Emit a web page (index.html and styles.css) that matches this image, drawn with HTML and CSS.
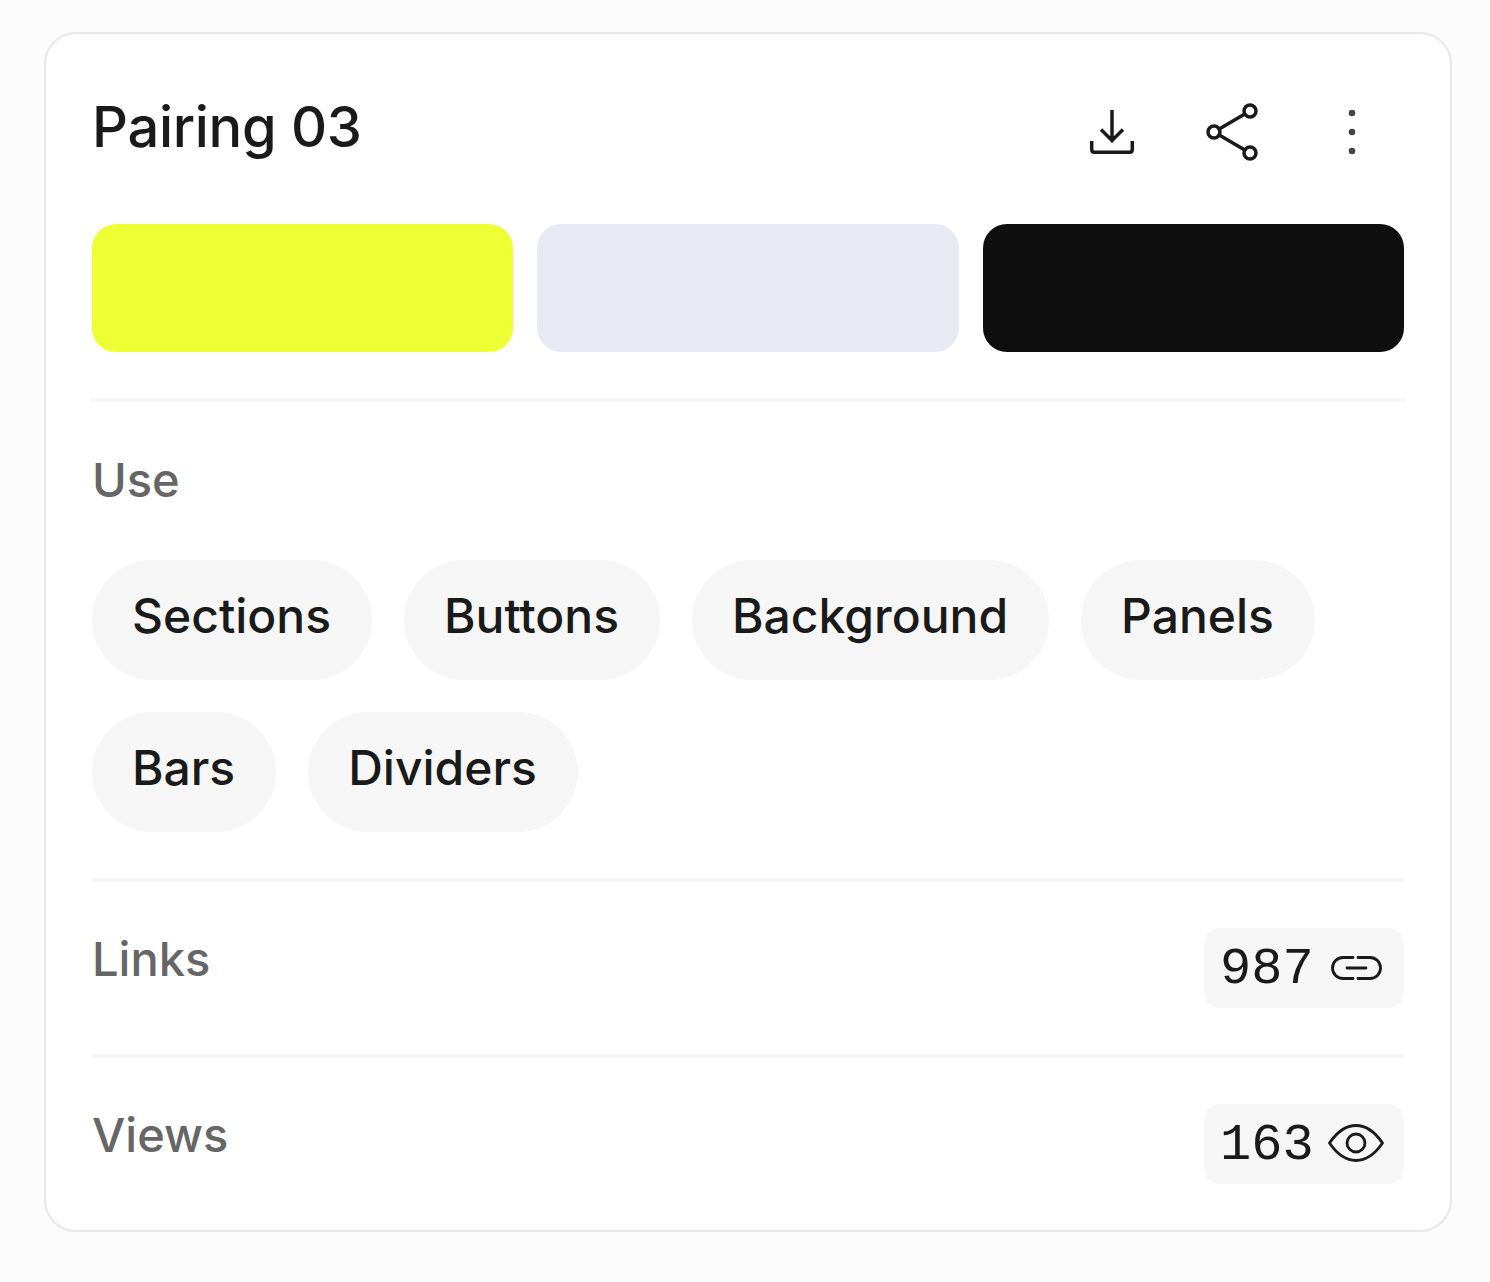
FILE: index.html
```html
<!DOCTYPE html>
<html lang="en">
<head>
<meta charset="utf-8">
<title>Pairing 03</title>
<link rel="stylesheet" href="styles.css">
</head>
<body>
<main class="card">
  <header class="head">
    <h1 class="title">Pairing 03</h1>
    <div class="actions">
      <svg class="action" viewBox="0 0 60 60" aria-label="Download"><path class="square" d="M30 8V38M19 27.500 30 38.500 41 27.500M9.700 39V47.500Q9.700 50.300 12.500 50.300H47.500Q50.300 50.300 50.300 47.500V39"/></svg>
      <svg class="action" viewBox="0 0 60 60" aria-label="Share"><circle cx="48" cy="9" r="6"/><circle cx="12" cy="30" r="6"/><circle cx="48" cy="51" r="6"/><path d="M17.200 27 42.800 12M17.200 33 42.800 48"/></svg>
      <svg class="action dots" viewBox="0 0 60 60" aria-label="More"><circle cx="30" cy="11" r="3.300"/><circle cx="30" cy="30" r="3.300"/><circle cx="30" cy="49" r="3.300"/></svg>
    </div>
  </header>
  <div class="swatches">
    <div class="swatch lime"></div>
    <div class="swatch lilac"></div>
    <div class="swatch black"></div>
  </div>
  <hr class="rule rule-wide">
  <section class="use">
    <h2 class="label">Use</h2>
    <ul class="pills">
      <li class="pill">Sections</li>
      <li class="pill">Buttons</li>
      <li class="pill">Background</li>
      <li class="pill">Panels</li>
      <li class="pill">Bars</li>
      <li class="pill">Dividers</li>
    </ul>
  </section>
  <hr class="rule">
  <section class="stat">
    <h2 class="label">Links</h2>
    <div class="badge"><span class="num">987</span>
      <svg class="badge-icon link" viewBox="0 0 56 30"><path d="M25 4.500H15C9.200 4.500 4.500 9.200 4.500 15S9.200 25.500 15 25.500H25M30 4.500H42C47.800 4.500 52.500 9.200 52.500 15S47.800 25.500 42 25.500H30M19 15H38"/></svg>
    </div>
  </section>
  <hr class="rule">
  <section class="stat stat-last">
    <h2 class="label">Views</h2>
    <div class="badge"><span class="num">163</span>
      <svg class="badge-icon eye" viewBox="0 0 56 40"><path d="M1.500 19C9 8 18 1.500 28 1.500S47 8 54.500 19C47 30 38 36.500 28 36.500S9 30 1.500 19Z"/><circle cx="28" cy="19" r="9"/></svg>
    </div>
  </section>
</main>
</body>
</html>
```
FILE: styles.css
```css
* { box-sizing: border-box; }
html, body { margin: 0; }
body {
  width: 1490px;
  height: 1282px;
  padding: 32px 38px 50px 44px;
  background: #fcfcfc;
  font-family: Inter, "Liberation Sans", sans-serif;
  color: #1a1a1a;
  overflow: hidden;
}
.card {
  width: 1408px;
  height: 1200px;
  background: #fff;
  border: 2px solid #e8e8e8;
  border-radius: 32px;
  padding: 46px 46px 0;
  display: flex;
  flex-direction: column;
}
.head {
  display: flex;
  justify-content: space-between;
  height: 100px;
  flex: none;
}
.title {
  margin: 15px 0 0;
  font-size: 56px;
  font-weight: 500;
  line-height: 64px;
  letter-spacing: -0.3px;
}
.actions {
  display: flex;
  gap: 60px;
  padding: 22px 22px 0 0;
}
.action {
  width: 60px;
  height: 60px;
  fill: none;
  stroke: #1a1a1a;
  stroke-width: 3.5;
  stroke-linecap: round;
  stroke-linejoin: round;
}
.square { stroke-linecap: butt; stroke-linejoin: miter; }
.dots { fill: #444; stroke: none; }
.swatches {
  margin-top: 44px;
  display: grid;
  grid-template-columns: repeat(3, 1fr);
  gap: 24px;
  flex: none;
}
.swatch { height: 128px; border-radius: 24px; }
.lime { background: #eeff33; }
.lilac { background: #e9e9f3; }
.black { background: #0f0f0f; }
.rule {
  width: 100%;
  height: 4px;
  margin: 0;
  border: 0;
  background: #f6f6f6;
  flex: none;
}
.rule-wide { width: 1316px; margin: 46px -2px 0; }
.use { padding: 52px 0 46px; flex: none; }
.label {
  margin: 0;
  font-size: 47px;
  font-weight: 500;
  line-height: 52px;
  color: #666;
}
.pills {
  list-style: none;
  margin: 54px 0 0;
  padding: 0;
  display: flex;
  flex-wrap: wrap;
  gap: 32px;
}
.pill {
  height: 120px;
  padding: 0 41px 10px 40px;
  display: flex;
  align-items: center;
  background: #f6f6f6;
  border-radius: 60px;
  font-size: 48px;
  font-weight: 500;
  white-space: nowrap;
}
.stat {
  display: flex;
  justify-content: space-between;
  align-items: flex-start;
  padding: 46px 0;
  height: 172px;
  flex: none;
}
.stat .label { margin-top: 5px; }
.stat-last { height: 126px; padding-bottom: 0; }
.badge {
  width: 200px;
  height: 80px;
  display: flex;
  align-items: center;
  justify-content: space-between;
  padding: 0 20px 0 16px;
  background: #f6f6f6;
  border-radius: 16px;
}
.num {
  font-family: "Liberation Mono", monospace;
  font-size: 52px;
  line-height: 76px;
  margin-top: 4px;
  color: #1a1a1a;
}
.badge-icon {
  width: 56px;
  fill: none;
  stroke: #1a1a1a;
  stroke-width: 2.800;
  stroke-linecap: round;
  stroke-linejoin: round;
}
.link { height: 30px; }
.eye { height: 40px; }
```
